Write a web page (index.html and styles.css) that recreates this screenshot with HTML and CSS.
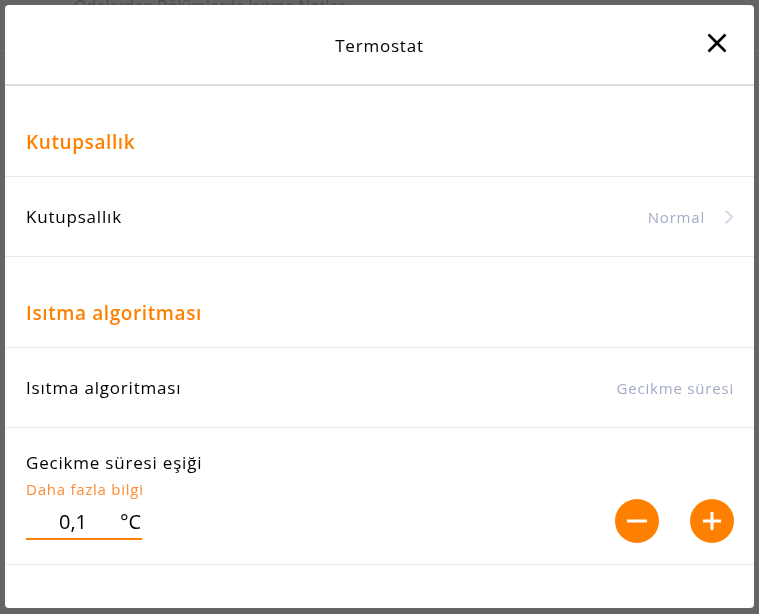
FILE: index.html
```html
<!DOCTYPE html>
<html lang="tr">
<head>
  <meta charset="UTF-8">
  <meta name="viewport" content="width=device-width, initial-scale=1">
  <title>Termostat</title>
  <link rel="stylesheet" href="styles.css">
</head>
<body>
  <!-- arka plandaki sayfa (karartılmış) -->
  <div class="page-behind">
    <div class="page-bar">
      <span>Odalardan Bölümlerde Isıtma Notlar</span>
    </div>
  </div>

  <div class="overlay">
    <div class="modal">
      <div class="modal-header">
        <h2>Termostat</h2>
        <button class="close-btn" aria-label="Kapat">
          <svg width="20" height="20" viewBox="0 0 20 20">
            <path d="M1.5 1.5 L18.5 18.5 M18.5 1.5 L1.5 18.5" stroke="#000" stroke-width="2.6" fill="none"/>
          </svg>
        </button>
      </div>

      <div class="section-title">Kutupsallık</div>
      <div class="row">
        <span class="row-label">Kutupsallık</span>
        <span class="row-value">Normal
          <svg class="chevron" width="10" height="16" viewBox="0 0 10 16">
            <path d="M1.5 1.5 L8 8 L1.5 14.5" stroke="#d3dae8" stroke-width="2" fill="none"/>
          </svg>
        </span>
      </div>

      <div class="section-title">Isıtma algoritması</div>
      <div class="row">
        <span class="row-label">Isıtma algoritması</span>
        <span class="row-value">Gecikme süresi</span>
      </div>

      <div class="row row-threshold">
        <div class="threshold-info">
          <div class="row-label">Gecikme süresi eşiği</div>
          <a class="more-link" href="#">Daha fazla bilgi</a>
          <div class="value-field">
            <span class="value">0,1</span>
            <span class="unit">°C</span>
          </div>
        </div>
        <div class="stepper">
          <button class="round-btn" aria-label="Azalt">
            <svg width="44" height="44" viewBox="0 0 44 44">
              <path d="M12 22 H32" stroke="#fff" stroke-width="3" fill="none"/>
            </svg>
          </button>
          <button class="round-btn" aria-label="Artır">
            <svg width="44" height="44" viewBox="0 0 44 44">
              <path d="M13 22 H31 M22 13 V31" stroke="#fff" stroke-width="3" fill="none"/>
            </svg>
          </button>
        </div>
      </div>
    </div>
  </div>
</body>
</html>
```

FILE: styles.css
```css
/* genel */
body {
  margin: 0;
  background: #656565;
  font-family: "Open Sans", Lato, sans-serif;
  color: #000;
  height: 614px;
  overflow: hidden;
}
.page-behind {
  height: 100%;
}
.page-bar {
  height: 50px;
  border-bottom: 1px solid #707070;
  padding: 0 74px;
  color: #4c4c4c;
  font-size: 16px;
  line-height: 12px;
}

/* pencere */
.overlay {
  position: fixed;
  left: 5px;
  top: 5px;
  right: 5px;
  bottom: 6px;
}
.modal {
  height: 100%;
  background: #fff;
  border-radius: 4px;
  overflow: hidden;
}
.modal-header {
  height: 79px;
  border-bottom: 2px solid #dcdcdc;
  display: flex;
  align-items: center;
  justify-content: center;
  position: relative;
}
.modal-header h2 {
  margin: 2px 0 0;
  font-size: 17px;
  font-weight: 400;
  letter-spacing: 0.8px;
}
.close-btn {
  position: absolute;
  right: 27px;
  top: 28px;
  width: 20px;
  height: 20px;
  padding: 0;
  border: none;
  background: none;
  cursor: pointer;
}
.close-btn svg { display: block; }

/* bölümler */
.section-title {
  padding: 44px 21px 22px;
  line-height: 24px;
  font-size: 19px;
  font-weight: 600;
  letter-spacing: 0.6px;
  color: #ff8000;
  border-bottom: 1px solid #e8e8e8;
}
.row {
  height: 79px;
  padding: 0 20px 0 21px;
  border-bottom: 1px solid #e8e8e8;
  display: flex;
  align-items: center;
  justify-content: space-between;
}
.row-label {
  font-size: 17px;
  letter-spacing: 0.8px;
}
.row-value {
  font-size: 15px;
  letter-spacing: 0.8px;
  color: #a2abc4;
  display: flex;
  align-items: center;
  gap: 19px;
}
.chevron { display: block; }

/* eşik */
.row-threshold {
  height: 136px;
  align-items: flex-start;
}
.threshold-info {
  padding-top: 24px;
  line-height: 22px;
}
.more-link {
  display: block;
  margin-top: 4px;
  font-size: 15px;
  letter-spacing: 0.75px;
  color: #ff8a33;
  text-decoration: none;
}
.value-field {
  width: 116px;
  height: 32px;
  margin-top: 6px;
  border-bottom: 2px solid #ff8000;
  display: flex;
  align-items: center;
  font-size: 20px;
}
.value {
  width: 61px;
  text-align: right;
}
.unit {
  margin-left: 33px;
}
.stepper {
  display: flex;
  gap: 31px;
  margin-top: 71px;
}
.round-btn {
  width: 44px;
  height: 44px;
  padding: 0;
  border: none;
  border-radius: 50%;
  background: #ff8000;
  cursor: pointer;
}
.round-btn svg { display: block; }
```
